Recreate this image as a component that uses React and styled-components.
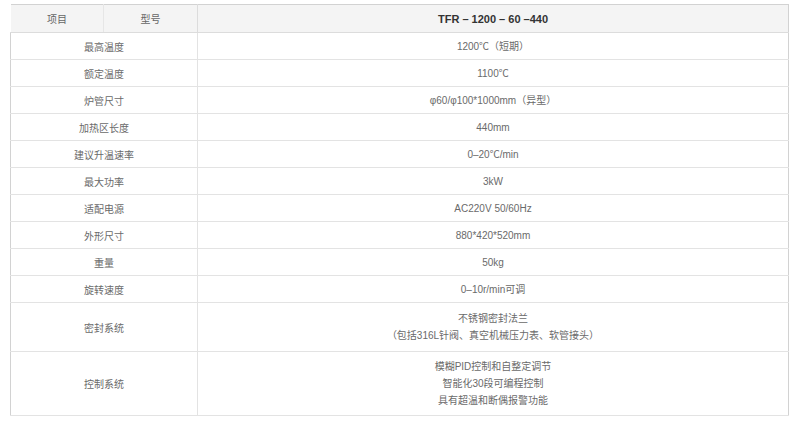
import React from 'react'
import styled, { createGlobalStyle } from 'styled-components'

// Styles
const GlobalStyle = createGlobalStyle`
  body {
    margin: 0;
    background: #fff;
    font-family: "Liberation Sans", "Noto Sans CJK SC", sans-serif;
  }
`

const Wrapper = styled.div`
  padding: 4px 11px 0 10px;
`

const SpecTable = styled.table`
  width: 779px;
  border-collapse: collapse;
  table-layout: fixed;
  border: 1px solid #d2d2d2;
  font-size: 10px;
  color: #6a6a6a;
`

const HeadRow = styled.tr`
  height: 28px;
  background: #f4f4f4;
`

const HeadCell = styled.th`
  font-weight: normal;
  text-align: center;
  border-left: 1px solid ${props => (props.first ? 'transparent' : '#e6e6e6')};
  border-bottom: 1px solid #dcdcdc;
  color: #666;
  padding: 0;
`

const ModelCell = styled.th`
  font-weight: bold;
  font-size: 11px;
  color: #333;
  text-align: center;
  border-left: 1px solid #dcdcdc;
  border-bottom: 1px solid #dcdcdc;
  padding: 0;
`

const Row = styled.tr`
  height: ${props => props.height}px;
`

const LabelCell = styled.td`
  text-align: center;
  border-bottom: 1px solid #e3e3e3;
  padding: 0;
`

const ValueCell = styled.td`
  text-align: center;
  line-height: 17px;
  border-left: 1px solid #e3e3e3;
  border-bottom: 1px solid #e3e3e3;
  padding: 0;
`

const specs = [
  { label: '最高温度', value: ['1200℃（短期）'] },
  { label: '额定温度', value: ['1100℃'] },
  { label: '炉管尺寸', value: ['φ60/φ100*1000mm（异型）'] },
  { label: '加热区长度', value: ['440mm'] },
  { label: '建议升温速率', value: ['0–20℃/min'] },
  { label: '最大功率', value: ['3kW'] },
  { label: '适配电源', value: ['AC220V 50/60Hz'] },
  { label: '外形尺寸', value: ['880*420*520mm'] },
  { label: '重量', value: ['50kg'] },
  { label: '旋转速度', value: ['0–10r/min可调'] },
  { label: '密封系统', value: ['不锈钢密封法兰', '（包括316L针阀、真空机械压力表、软管接头）'], height: 49 },
  { label: '控制系统', value: ['模糊PID控制和自整定调节', '智能化30段可编程控制', '具有超温和断偶报警功能'], height: 64 },
]

// Component
const App = () => (
  <>
    <GlobalStyle />
    <Wrapper>
      <SpecTable>
        <colgroup>
          <col style={{ width: 93 }} />
          <col style={{ width: 94 }} />
          <col />
        </colgroup>
        <thead>
          <HeadRow>
            <HeadCell first>项目</HeadCell>
            <HeadCell>型号</HeadCell>
            <ModelCell>TFR – 1200 – 60 –440</ModelCell>
          </HeadRow>
        </thead>
        <tbody>
          {specs.map(spec => (
            <Row key={spec.label} height={spec.height || 27}>
              <LabelCell colSpan={2}>{spec.label}</LabelCell>
              <ValueCell>
                {spec.value.map(line => (
                  <div key={line}>{line}</div>
                ))}
              </ValueCell>
            </Row>
          ))}
        </tbody>
      </SpecTable>
    </Wrapper>
  </>
)

export default App
